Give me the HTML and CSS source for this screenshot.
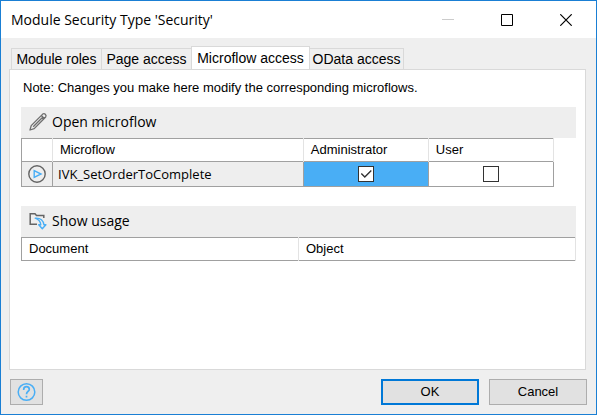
FILE: index.html
```html
<!DOCTYPE html>
<html lang="en">
<head>
<meta charset="utf-8">
<title>Module Security Type 'Security'</title>
<link rel="stylesheet" href="styles.css">
</head>
<body>
<main class="window">
  <header class="titlebar">
    <h1 class="title">Module Security Type 'Security'</h1>
    <button class="caption" type="button" aria-label="Minimize" disabled>
      <svg width="12" height="12" viewBox="0 0 12 12" shape-rendering="crispEdges"><path d="M0 5.5H12" stroke="#ccc"/></svg>
    </button>
    <button class="caption" type="button" aria-label="Maximize">
      <svg width="12" height="12" viewBox="0 0 12 12"><path d="M.5.5h11v11H.5z" fill="none" stroke="#000"/></svg>
    </button>
    <button class="caption" type="button" aria-label="Close">
      <svg width="12" height="12" viewBox="0 0 12 12"><path d="M.3.3 11.7 11.7M11.7.3.3 11.7" stroke="#000" stroke-width="1.2"/></svg>
    </button>
  </header>

  <div class="content">
    <div class="tabs" role="tablist">
      <button class="tab" type="button" role="tab">Module roles</button>
      <button class="tab" type="button" role="tab">Page access</button>
      <button class="tab tab-active" type="button" role="tab" aria-selected="true">Microflow access</button>
      <button class="tab" type="button" role="tab">OData access</button>
    </div>

    <section class="panel" role="tabpanel">
      <p class="note">Note: Changes you make here modify the corresponding microflows.</p>

      <div class="toolbar">
        <button class="tool" type="button">
          <svg width="20" height="20" viewBox="0 0 20 20" fill="none" stroke="#6e6e6e" stroke-width="1.3" stroke-linejoin="round"><path d="M2 18 3.2 13.6 14.7 2.1Q16 1 17.3 2.3T17.7 5L6.2 16.6ZM5.2 14.8 15.2 4.8M13.3 3.5l3 3"/></svg>
          Open microflow
        </button>
      </div>
      <table class="grid grid-access">
        <colgroup><col class="col-icon"><col class="col-name"><col class="col-role"><col class="col-role"></colgroup>
        <thead>
          <tr><th></th><th>Microflow</th><th>Administrator</th><th>User</th></tr>
        </thead>
        <tbody>
          <tr>
            <td class="cell-icon"><svg width="18" height="18" viewBox="0 0 18 18" fill="none"><circle cx="9" cy="9" r="8.2" stroke="#646464" stroke-width="1.4"/><path d="M6.2 5.7 13 9l-6.8 3.3Z" stroke="#49aef5" stroke-width="1.4"/></svg></td>
            <td class="cell-name">IVK_SetOrderToComplete</td>
            <td class="cell-check cell-selected"><input class="check" type="checkbox" aria-label="Administrator" checked></td>
            <td class="cell-check"><input class="check" type="checkbox" aria-label="User"></td>
          </tr>
        </tbody>
      </table>

      <div class="toolbar toolbar-usage">
        <button class="tool" type="button">
          <svg width="20" height="20" viewBox="0 0 20 20" fill="none"><path d="M9 13.3H2.2V2.7H7l1.5 1.7h7.3V7" stroke="#646464" stroke-width="1.5"/><path d="M7.2 7.2c4.6-.3 8 2.2 8.7 6.5h2l-3.6 4-3.6-4h2.1c-.3-3-2.1-5.2-5.6-6.5Z" stroke="#49aef5" stroke-width="1.4" stroke-linejoin="round"/></svg>
          Show usage
        </button>
      </div>
      <table class="grid grid-usage">
        <thead><tr><th>Document</th><th>Object</th></tr></thead>
      </table>
    </section>
  </div>

  <footer class="footer">
    <button class="button button-help" type="button" aria-label="Help">
      <svg width="19" height="20" viewBox="0 0 19 20" fill="none" stroke="#49aef5"><circle cx="9.5" cy="10" r="8.3" stroke-width="1.5"/><path d="M6.7 8V7.4A2.8 2.8 0 0 1 12.3 7.4C12.3 9.4 9.5 9.2 9.5 12.2M9.5 13.7v1.8" stroke-width="1.7"/></svg>
    </button>
    <button class="button button-default" type="button">OK</button>
    <button class="button" type="button">Cancel</button>
  </footer>
</main>
</body>
</html>
```

FILE: styles.css
```css
* {
  box-sizing: border-box;
}

body {
  margin: 0;
  background: #efefef;
  color: #000;
  font: 13px/16px "Liberation Sans", Arial, sans-serif;
}

button {
  margin: 0;
  padding: 0;
  border: 0;
  background: none;
  color: inherit;
  font: inherit;
}

svg {
  display: block;
}

.window {
  display: flex;
  flex-direction: column;
  min-height: 100vh;
  border: 1px solid #1a7fd4;
}

.titlebar {
  display: flex;
  align-items: center;
  height: 37px;
  padding: 0 1px 0 10px;
  background: #fff;
}

.title {
  flex: 1;
  margin: 0;
  font: 14px/20px "Open Sans", "Segoe UI", sans-serif;
}

.caption {
  display: flex;
  align-items: center;
  justify-content: center;
  width: 59px;
  height: 37px;
}

.content {
  display: flex;
  flex: 1;
  flex-direction: column;
  padding: 8px 10px 0 8px;
}

.tabs {
  display: flex;
  align-items: flex-end;
  padding-left: 2px;
}

.tab {
  height: 21px;
  min-width: 90px;
  padding: 0 4px;
  border: 1px solid #d9d9d9;
  border-width: 1px 0 0 1px;
  font-size: 14px;
  text-align: center;
  white-space: nowrap;
}

.tab-active {
  height: 24px;
  min-width: 119px;
  margin-bottom: -1px;
  padding-bottom: 2px;
  border-width: 1px 1px 0;
  background: #fff;
}

.tab-active + .tab {
  min-width: 94px;
  padding: 0 2px;
  border-width: 1px 1px 0 0;
}

.panel {
  flex: 1;
  padding: 10px 9px 10px 11px;
  border: 1px solid #d9d9d9;
  background: #fff;
}

.note {
  margin: 0 0 11px 2px;
}

.toolbar {
  height: 31px;
  padding-left: 7px;
  background: #eee;
}

.toolbar-usage {
  margin-top: 19px;
}

.tool {
  display: flex;
  align-items: center;
  gap: 4px;
  height: 30px;
  font: 14px/20px "Open Sans", "Segoe UI", sans-serif;
}

.grid {
  border-collapse: collapse;
  table-layout: fixed;
  border: 1px solid #a0a0a0;
}

.grid th {
  height: 23px;
  padding: 0 7px;
  border-right: 1px solid #e3e3e3;
  font-weight: normal;
  text-align: left;
}

.grid td {
  height: 25px;
  padding: 0;
  border: 1px solid #a0a0a0;
}

.grid-access {
  width: 96%;
}

.col-icon {
  width: 31px;
}

.col-role {
  width: 125px;
}

.grid-usage {
  width: 100%;
}

.cell-icon,
.cell-name {
  background: #eee;
}

.cell-icon svg {
  margin: 0 auto;
}

.grid .cell-name {
  padding-left: 5px;
  font: 13px/20px "Open Sans", "Segoe UI", sans-serif;
}

.cell-check {
  text-align: center;
}

.grid .cell-selected {
  background: #49aef5;
}

.check {
  display: block;
  width: 16px;
  height: 16px;
  margin: 0 auto;
  border: 1px solid #333;
  background: #fff;
  appearance: none;
}

.check:checked::before {
  display: block;
  width: 14px;
  height: 14px;
  background: #333;
  clip-path: polygon(2px 7px, 3px 6px, 6px 9px, 12px 3px, 13px 4px, 6px 11px);
  content: "";
}

.footer {
  display: flex;
  gap: 10px;
  padding: 9px;
}

.button {
  display: flex;
  align-items: center;
  justify-content: center;
  width: 98px;
  height: 26px;
  border: 1px solid #adadad;
  background: #e1e1e1;
}

.button-help {
  width: 33px;
  margin-right: auto;
}

.button-default {
  border: 2px solid #0078d7;
}
```
